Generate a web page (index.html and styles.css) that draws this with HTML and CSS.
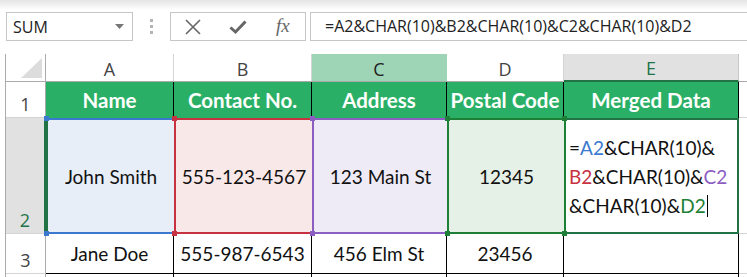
FILE: index.html
```html
<!DOCTYPE html>
<html lang="en">
<head>
  <meta charset="UTF-8">
  <meta name="viewport" content="width=device-width, initial-scale=1.0">
  <title>Merged Data</title>
  <link rel="stylesheet" href="styles.css">
</head>
<body>

<div class="formula-bar">
  <div class="name-box">
    <span>SUM</span>
    <svg width="9" height="5" viewBox="0 0 9 5"><path d="M0 0 L9 0 L4.5 5 Z" fill="#777"/></svg>
  </div>
  <div class="grip"><i></i><i></i><i></i></div>
  <div class="fx-buttons">
    <svg class="btn-x" width="16" height="16" viewBox="0 0 16 16"><path d="M1 1 L15 15 M15 1 L1 15" stroke="#666" stroke-width="1.6" fill="none"/></svg>
    <svg class="btn-ok" width="18" height="16" viewBox="0 0 18 16"><path d="M1.5 8.5 L6.5 13 L16.5 2.5" stroke="#666" stroke-width="3" fill="none"/></svg>
    <span class="fx">fx</span>
  </div>
  <div class="formula-input">=A2&amp;CHAR(10)&amp;B2&amp;CHAR(10)&amp;C2&amp;CHAR(10)&amp;D2</div>
</div>

<div class="sheet">
  <!-- column letters -->
  <div class="corner">
    <svg width="21" height="20" viewBox="0 0 21 20"><path d="M21 0 L21 20 L0 20 Z" fill="#dcdcdc"/></svg>
  </div>
  <div class="col-head">A</div>
  <div class="col-head">B</div>
  <div class="col-head col-sel">C</div>
  <div class="col-head">D</div>
  <div class="col-head col-active">E</div>
  <div class="col-head col-rest"></div>

  <!-- row 1 -->
  <div class="row-head">1</div>
  <div class="cell title">Name</div>
  <div class="cell title">Contact No.</div>
  <div class="cell title">Address</div>
  <div class="cell title">Postal Code</div>
  <div class="cell title">Merged Data</div>
  <div class="cell rest"></div>

  <!-- row 2 -->
  <div class="row-head row-active">2</div>
  <div class="cell ref ref-a">John Smith</div>
  <div class="cell ref ref-b">555-123-4567</div>
  <div class="cell ref ref-c">123 Main St</div>
  <div class="cell ref ref-d">12345</div>
  <div class="cell editing">
    <div>=<span class="c-a">A2</span>&amp;CHAR(10)&amp;<br><span class="c-b">B2</span>&amp;CHAR(10)&amp;<span class="c-c">C2</span><br>&amp;CHAR(10)&amp;<span class="c-d">D2</span><span class="caret"></span></div>
  </div>
  <div class="cell rest"></div>

  <!-- row 3 -->
  <div class="row-head">3</div>
  <div class="cell plain">Jane Doe</div>
  <div class="cell plain">555-987-6543</div>
  <div class="cell plain">456 Elm St</div>
  <div class="cell plain">23456</div>
  <div class="cell plain"></div>
  <div class="cell rest"></div>

  <!-- row 4 -->
  <div class="row-head"></div>
  <div class="cell plain"></div>
  <div class="cell plain"></div>
  <div class="cell plain"></div>
  <div class="cell plain"></div>
  <div class="cell plain"></div>
  <div class="cell rest"></div>
</div>

</body>
</html>
```

FILE: styles.css
```css
body {
  margin: 0;
  padding: 0;
  height: 277px;
  overflow: hidden;
  background: #fff;
  font-family: "Open Sans", sans-serif;
}

/* formula bar */
.formula-bar {
  display: flex;
  align-items: center;
  padding: 12px 0 0 6px;
  background: linear-gradient(#e4e4e4 0, #fff 10px);
}
.name-box {
  box-sizing: border-box;
  width: 127px;
  height: 29px;
  border: 1px solid #c6c6c6;
  display: flex;
  align-items: center;
  justify-content: space-between;
  padding: 0 8px 0 6px;
  font-size: 16px;
  color: #222;
}
.grip {
  display: flex;
  flex-direction: column;
  gap: 3px;
  margin: 0 17px 0 17px;
}
.grip i {
  display: block;
  width: 3px;
  height: 3px;
  background: #b4b4b4;
}
.fx-buttons {
  box-sizing: border-box;
  width: 136px;
  height: 29px;
  border: 1px solid #c6c6c6;
  display: flex;
  align-items: center;
  padding-left: 14px;
}
.btn-ok {
  margin-left: 28px;
}
.fx {
  margin-left: 29px;
  font-family: "Liberation Serif", serif;
  font-style: italic;
  font-size: 19px;
  color: #666;
  margin-top: -2px;
}
.formula-input {
  box-sizing: border-box;
  flex: 1;
  height: 29px;
  margin-left: 4px;
  border: 1px solid #c6c6c6;
  border-right: none;
  padding: 0 0 0 14px;
  font-size: 16px;
  line-height: 27px;
  color: #222;
  white-space: nowrap;
}

/* sheet grid */
.sheet {
  display: grid;
  grid-template-columns: 40px 128px 138px 135px 117px 175px 1fr;
  grid-template-rows: 28px 36px 116px 40px 20px;
  margin: 13px 0 0 5px;
  border-left: 1px solid #ababab;
}
.sheet > div {
  box-sizing: border-box;
}
.corner {
  display: flex;
  align-items: flex-end;
  justify-content: flex-end;
  padding: 0 3px 3px 0;
  border-right: 1px solid #ababab;
  border-bottom: 1px solid #ababab;
}
.col-head {
  display: flex;
  align-items: center;
  justify-content: center;
  font-size: 18px;
  color: #444;
  border-right: 1px solid #d4d4d4;
  border-bottom: 1px solid #ababab;
  padding-top: 2px;
}
.col-sel {
  background: #9fd5b7;
  color: #222;
  border-right-color: #9fd5b7;
}
.col-active {
  background: #e1e1e1;
  color: #217346;
  border-bottom: 2px solid #217346;
  border-right-color: #c6c6c6;
}
.col-rest {
  border-right: none;
}
.row-head {
  display: flex;
  align-items: flex-end;
  justify-content: center;
  padding-bottom: 1px;
  font-size: 18px;
  color: #444;
  border-right: 1px solid #ababab;
  border-bottom: 1px solid #d4d4d4;
}
.row-active {
  background: #e1e1e1;
  color: #217346;
  border-right: 2px solid #217346;
}

/* cells */
.cell {
  position: relative;
  display: flex;
  align-items: center;
  justify-content: center;
  font-family: Lato, sans-serif;
  font-size: 19px;
  color: #111;
}
.title {
  background: #2ab066;
  color: #fff;
  font-weight: bold;
  font-size: 20.5px;
  border-right: 1px solid #000;
}
.plain {
  border-right: 1px solid #000;
  border-bottom: 1px solid #000;
}
.rest {
  border-bottom: 1px solid #d4d4d4;
}

/* coloured formula references */
.ref {
  border-top: 2px solid;
  border-bottom: 2px solid;
  border-left: 2px solid;
}
.ref::before,
.ref::after {
  content: "";
  position: absolute;
  left: -4px;
  width: 5px;
  height: 5px;
  z-index: 2;
}
.ref::before { top: -4px; }
.ref::after { bottom: -4px; }
.ref-a { background: #e8eef8; border-color: #3b78d0; border-left-color: #217346; }
.ref-a::before, .ref-a::after { background: #3b78d0; }
.ref-b { background: #f8e8e8; border-color: #c6323f; }
.ref-b::before, .ref-b::after { background: #c6323f; }
.ref-c { background: #efebf6; border-color: #8c5ec2; }
.ref-c::before, .ref-c::after { background: #8c5ec2; }
.ref-d { background: #e5f1e6; border-color: #1d8036; }
.ref-d::before, .ref-d::after { background: #1d8036; }

.editing {
  justify-content: flex-start;
  border: 2px solid #217346;
  border-left-color: #1d8036;
  padding-left: 3px;
  line-height: 29px;
  color: #111;
}
.editing::before,
.editing::after {
  content: "";
  position: absolute;
  width: 5px;
  height: 5px;
  background: #1d8036;
  left: -4px;
  z-index: 2;
}
.editing::before { top: -4px; }
.editing::after { bottom: -4px; }
.c-a { color: #3b78d0; }
.c-b { color: #c6323f; }
.c-c { color: #8c5ec2; }
.c-d { color: #1d8036; }
.caret {
  display: inline-block;
  width: 1px;
  height: 22px;
  background: #000;
  vertical-align: -4px;
  margin-left: 1px;
}
```
